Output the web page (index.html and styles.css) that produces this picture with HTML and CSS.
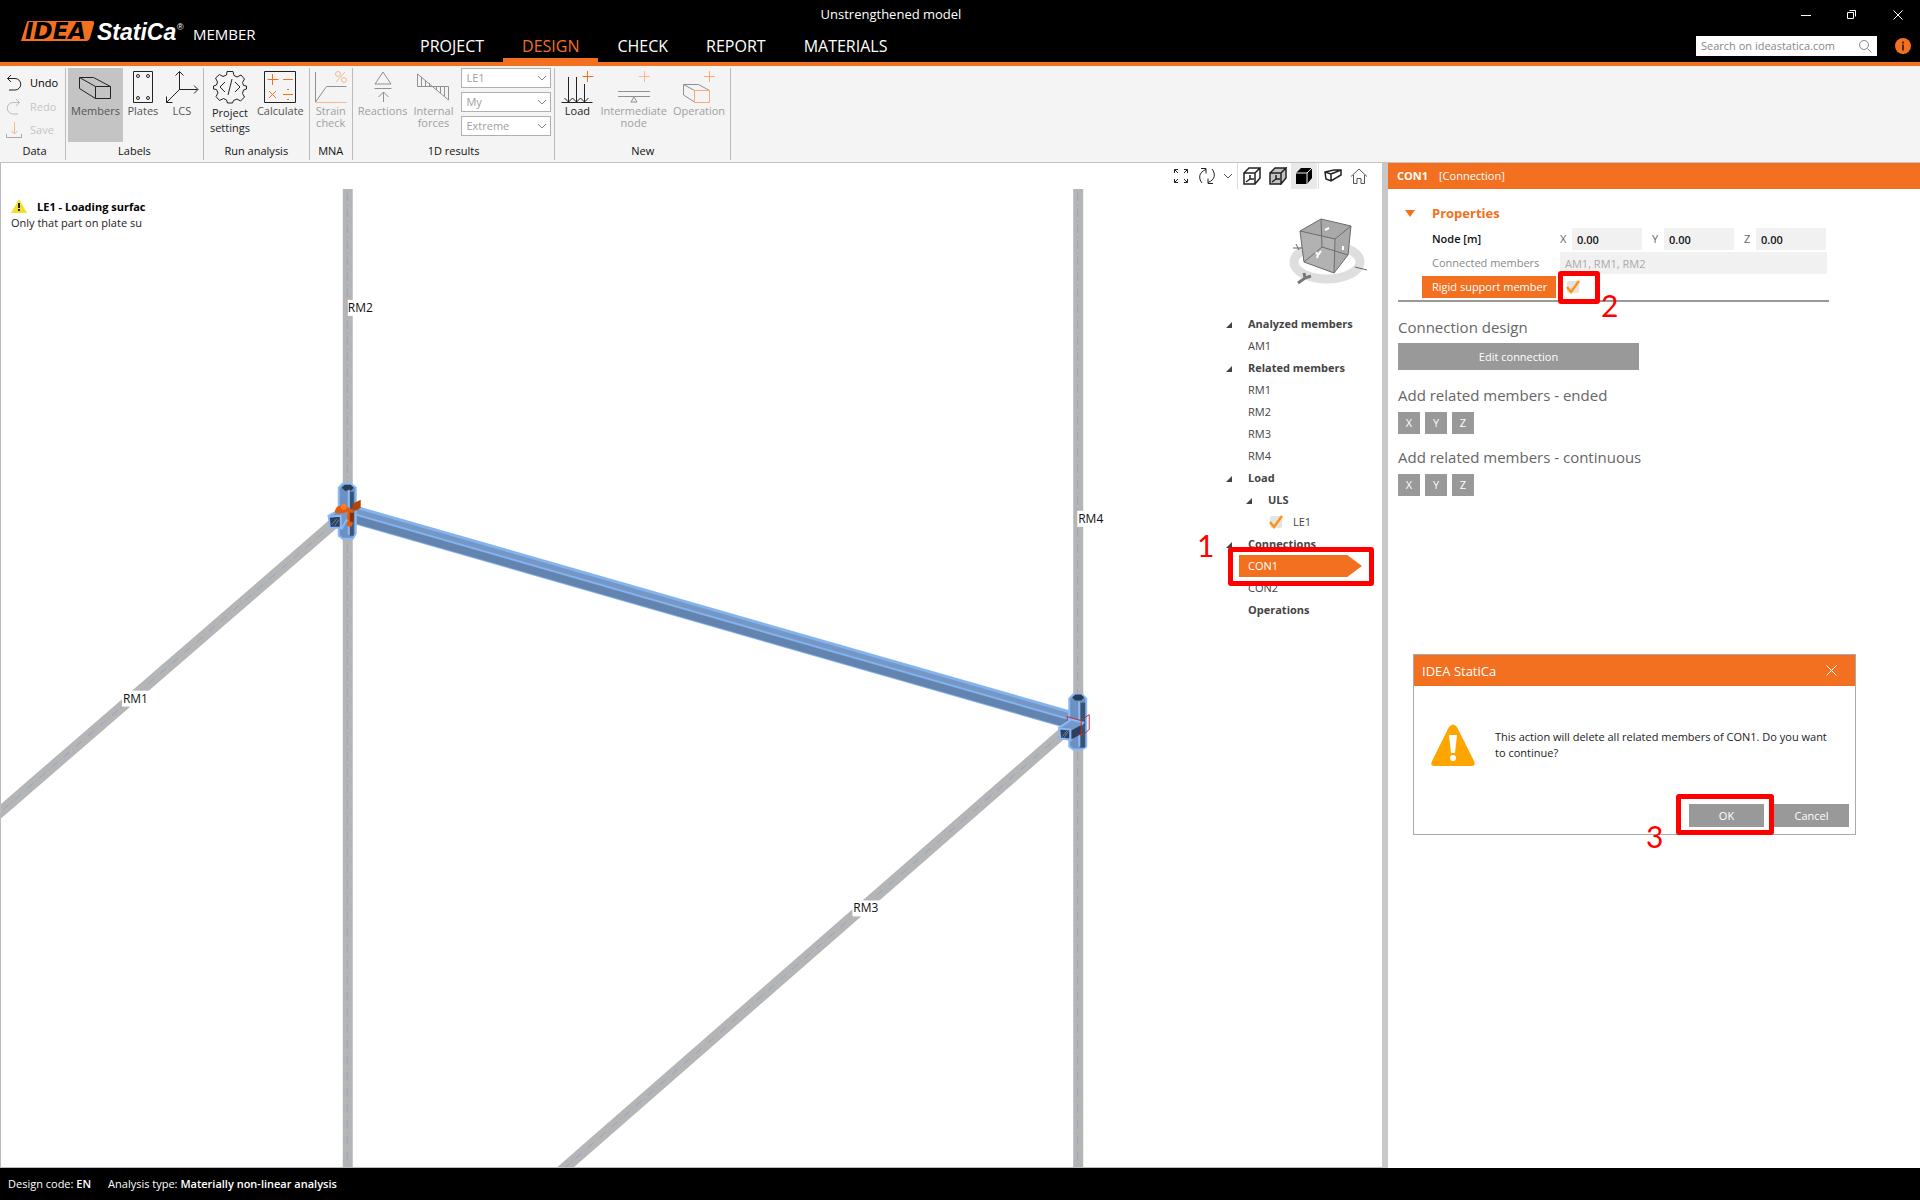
FILE: index.html
```html
<!DOCTYPE html>
<html lang="en">
<head>
  <meta charset="UTF-8">
  <meta name="viewport" content="width=device-width, initial-scale=1.0">
  <title>Unstrengthened model</title>
  <link rel="stylesheet" href="styles.css">
</head>
<body>

  <header class="topbar">
    <div class="brand">
      <svg class="logo" width="170" height="26" viewBox="0 0 170 26">
        <path d="M8 2h64q3 0 2 3l-4 14q-1 3-4 3H1L7 3z" fill="#f37021"/>
        <text class="logo-idea" x="5" y="20">IDEA</text>
        <text class="logo-statica" x="77" y="21">StatiCa</text>
        <text class="logo-reg" x="157" y="11">®</text>
      </svg>
      <span class="product">MEMBER</span>
    </div>
    <nav class="tabs">
      <a href="#" class="tab">PROJECT</a>
      <a href="#" class="tab active">DESIGN</a>
      <a href="#" class="tab">CHECK</a>
      <a href="#" class="tab">REPORT</a>
      <a href="#" class="tab">MATERIALS</a>
    </nav>
    <div class="window-title">Unstrengthened model</div>
    <div class="top-right">
      <div class="window-buttons">
        <button type="button" aria-label="Minimize"><svg width="10" height="10"><path d="M0 5.5h10" stroke="#fff"/></svg></button>
        <button type="button" aria-label="Restore"><svg width="10" height="10" fill="none" stroke="#fff"><path d="M.5 2.5h6v6h-6zM2.500.5h6v6"/></svg></button>
        <button type="button" aria-label="Close"><svg width="10" height="10"><path d="M.5.5l9 9M9.500.5l-9 9" stroke="#fff"/></svg></button>
      </div>
      <div class="search-row">
        <div class="search">
          <input type="text" placeholder="Search on ideastatica.com" aria-label="Search on ideastatica.com">
          <svg width="14" height="14" fill="none" stroke="#888"><circle cx="6" cy="6" r="4.500"/><path d="M9.500 9.500l4 4"/></svg>
        </div>
        <button type="button" class="info" aria-label="Info"><svg width="16" height="16"><circle cx="8" cy="8" r="8" fill="#f37021"/><path d="M7 3.500h2v2H7zM7 6.500h2v6H7z" fill="#4a2a12"/></svg></button>
      </div>
    </div>
  </header>

  <div class="ribbon">
    <section class="group data-group">
      <div class="group-body stack">
        <button type="button" class="small-tool"><svg width="18" height="18" fill="none" stroke="#222"><path d="M5 1L1.500 4.500 5 8M1.500 4.500H9a5.500 5.500 0 010 11.500H3"/></svg>Undo</button>
        <button type="button" class="small-tool" disabled><svg width="18" height="18" fill="none" stroke="#bbb"><path d="M10 1l3.500 3.500L10 8M13.500 4.500H7A5.500 5.500 0 007 16h5"/></svg>Redo</button>
        <button type="button" class="small-tool" disabled><svg width="18" height="18" fill="none" stroke="#aaa"><path d="M.5 13v3.500h15V13"/><path d="M8.500 1v12M5.500 10l3 3 3-3" stroke="#f9b890"/></svg>Save</button>
      </div>
      <h2>Data</h2>
    </section>

    <section class="group">
      <div class="group-body">
        <button type="button" class="tool pressed">
          <svg width="34" height="34" fill="none" stroke="#222"><path d="M1.500 7.500h14l17 9v12h-15l-16-10zM1.500 7.500l16 9h15M17.500 16.500v12"/></svg>
          Members</button>
        <button type="button" class="tool">
          <svg width="34" height="34" fill="none" stroke="#222"><path d="M7.500 1.500h19v31h-19z"/><circle cx="12" cy="6" r="1.500"/><circle cx="22" cy="6" r="1.500"/><circle cx="12" cy="28" r="1.500"/><circle cx="22" cy="28" r="1.500"/></svg>
          Plates</button>
        <button type="button" class="tool tight">
          <svg width="34" height="34" fill="none" stroke="#222"><path d="M14.500 20V1.500M10.500 5.500l4-4 4 4M14.500 19.500h18M29 15.500l4 4-4 4M14.500 19.500l-13 13M1.500 26.500v6h6"/></svg>
          LCS</button>
      </div>
      <h2>Labels</h2>
    </section>

    <section class="group">
      <div class="group-body">
        <button type="button" class="tool dark loose">
          <svg width="34" height="34" fill="none" stroke="#222"><path d="M14 1.500h6l1 4 3 1.500 4-2 3.500 4-2 3.500 1 3 3 .5v3l-3 1-1 3.500 2 3.500-4 4-3.500-2-3.500 1.500-1 2.500h-5l-1-3-3-1.500-4 2-3.500-4 2-3.500-1.500-3.500-3-.5v-3l3-1 1-3-2-4 4-3.500 3.500 2 3.500-1.500zM12 12l-5 5 5 5M22 12l5 5-5 5M19 9l-4 16"/></svg>
          Project<br>settings</button>
        <button type="button" class="tool">
          <svg width="34" height="34" fill="none" stroke="#222"><path d="M1.500 1.500h31v31h-31z"/><path d="M4.500 9.500h11M9.500 4v11M20 9.500h10M6 21l7 7M13 21l-7 7M20 24.500h10M24 19.500h2M24 29.500h2" stroke="#f37021"/></svg>
          Calculate</button>
      </div>
      <h2>Run analysis</h2>
    </section>

    <section class="group">
      <div class="group-body">
        <button type="button" class="tool tight" disabled>
          <svg width="34" height="34" fill="none" stroke="#909090"><path d="M1.500 2v30l11-15.500h20"/><path d="M1.500 32.500h31M31 2L22 12" stroke="#f9b890"/><circle cx="24" cy="4" r="2.500" stroke="#f9b890"/><circle cx="30" cy="10" r="2.500" stroke="#f9b890"/></svg>
          Strain<br>check</button>
      </div>
      <h2>MNA</h2>
    </section>

    <section class="group">
      <div class="group-body">
        <button type="button" class="tool" disabled>
          <svg width="34" height="34" fill="none" stroke="#909090"><path d="M17 2l8 12H9zM8.500 18.500h17M17.500 32V22M12.500 27l5-5 5 5"/></svg>
          Reactions</button>
        <button type="button" class="tool" disabled>
          <svg width="34" height="34" fill="none" stroke="#909090"><path d="M1.500 4v12.500h31V30zM5.500 7v9M9.500 10v6M13.500 13v3M20.500 17v3M24.500 17v6M28.500 17v9"/></svg>
          Internal<br>forces</button>
        <div class="selects">
          <div class="select"><select aria-label="Load case" disabled><option>LE1</option></select><svg width="10" height="6" fill="none" stroke="#888"><path d="M1 1l4 4 4-4"/></svg></div>
          <div class="select"><select aria-label="Result" disabled><option>My</option></select><svg width="10" height="6" fill="none" stroke="#888"><path d="M1 1l4 4 4-4"/></svg></div>
          <div class="select"><select aria-label="Values" disabled><option>Extreme</option></select><svg width="10" height="6" fill="none" stroke="#888"><path d="M1 1l4 4 4-4"/></svg></div>
        </div>
      </div>
      <h2>1D results</h2>
    </section>

    <section class="group">
      <div class="group-body">
        <button type="button" class="tool dark">
          <svg width="34" height="34" fill="none" stroke="#222"><path d="M1.500 32.500h31M8.500 7v25M16.500 7v25M24.500 14v18M4.500 28l4 4 4-4 4 4 4-4 4 4 4-4"/><path d="M22.500 6.500h11M27.500 1v11" stroke="#f37021"/></svg>
          Load</button>
        <button type="button" class="tool" disabled>
          <svg width="34" height="34" fill="none" stroke="#909090"><path d="M1 21.500h32M1 26.500h32M17 27l-3 5h6z"/><path d="M22 6.500h11M27.500 1v11" stroke="#f9b890"/></svg>
          Intermediate<br>node</button>
        <button type="button" class="tool" disabled>
          <svg width="34" height="34" fill="none" stroke="#909090"><path d="M12.500 32l-11-7V14.500h15l11 6M1.500 14.500l11 6"/><path d="M12.500 20.500h15v12h-15zM22 6.500h11M27.500 1v11" stroke="#f9a878"/></svg>
          Operation</button>
      </div>
      <h2>New</h2>
    </section>
  </div>

  <main class="workspace">
    <div class="viewport">
      <svg class="scene" viewBox="0 163 1382 1005" preserveAspectRatio="xMinYMin slice">
        <!-- related members -->
        <g stroke="#b5b5b5" stroke-width="11" fill="none">
          <path d="M347 189V1169M1078 189V1169" stroke-width="10"/>
          <path d="M335 522L-5 816M1063 733L558 1174"/>
        </g>
        <g stroke="#88a5cf" stroke-width="1" stroke-dasharray="8 4 1 3" fill="none">
          <path d="M346.500 193V1169M1077.500 193V1169"/>
          <path d="M335 522L-5 816M1063 733L558 1174"/>
        </g>

        <!-- analyzed member -->
        <path d="M352 505L1070 711V730L352 524z" fill="#85b3ee"/>
        <path d="M352 508L1070 714V719L352 513z" fill="#7597c6"/>
        <path d="M352 515L1070 721V729L352 523z" fill="#6484b0"/>

        <!-- left joint -->
        <path d="M338 488l4-4h8l5 4v46l-3 5h-10l-4-3z" fill="#6c90c1" stroke="#8ab9f7" stroke-width="2"/>
        <path d="M349 492h4v44h-4z" fill="#3b5371"/>
        <path d="M341 488l3-3h6l3 3-3 3h-6z" fill="#263b54"/>
        <path d="M348 490v45" stroke="#8ab9f7" stroke-width="2"/>
        <path d="M328 516l13-7 9 4-9 16z" fill="#7398c9" stroke="#8ab9f7" stroke-width="2"/>
        <path d="M328 517l12-1v12h-11z" fill="#2c4159" stroke="#8ab9f7" stroke-width="2"/>
        <path d="M331 525l5-6M334 526l4-6" stroke="#6784a8"/>
        <path d="M334 512q1-6 6-6 5-2 9 3l4 1-2 11q-4 1-5-2l1-7q-7 3-13 1z" fill="#e35b0d"/>
        <path d="M352 510q-1-7 4-8l4-2v8l-5 3z" fill="#b34409"/>
        <circle cx="343" cy="507" r="3" fill="#ff7b2b"/>
        <circle cx="349" cy="524" r="3" fill="#e35b0d"/>
        <path d="M349 513h4v9h-4z" fill="#873005"/>

        <!-- right joint -->
        <path d="M1069 699l4-4h9l4 4v48l-4 3h-9l-4-3z" fill="#6c90c1" stroke="#8ab9f7" stroke-width="2"/>
        <path d="M1080 703h5v45h-5z" fill="#3b5371"/>
        <path d="M1072 698l3-3h6l3 3-3 3h-6z" fill="#263b54"/>
        <path d="M1079 702v45" stroke="#8ab9f7" stroke-width="2"/>
        <path d="M1059 728l12-8 12 3-12 17z" fill="#7398c9" stroke="#8ab9f7" stroke-width="2"/>
        <path d="M1071 731l11-6v9l-11 6z" fill="#2c4159"/>
        <path d="M1059 729l11 1v10l-10-1z" fill="#2c4159" stroke="#8ab9f7" stroke-width="2"/>
        <path d="M1062 737l5-6M1064 738l4-6" stroke="#6784a8"/>
        <path d="M1067 721v-4l14 4v14M1079 735h4l6-5v-15l-7 5" fill="none" stroke="#c03038"/>

        <g class="member-labels">
          <rect x="347" y="300" width="27" height="16"/><text x="347" y="312">RM2</text>
          <rect x="121" y="691" width="28" height="16"/><text x="122" y="703">RM1</text>
          <rect x="852" y="901" width="28" height="16"/><text x="853" y="913">RM3</text>
          <rect x="1077" y="511" width="28" height="16"/><text x="1078" y="523">RM4</text>
        </g>
      </svg>

      <div class="notice">
        <p class="notice-title"><svg width="16" height="15"><path d="M8 0l8 14H0z" fill="#f2e02c"/><path d="M7 4h2v5H7zM7 10h2v2H7z" fill="#222"/></svg><strong>LE1 - Loading surfac</strong></p>
        <p>Only that part on plate su</p>
      </div>

      <div class="side">
        <div class="view-tools">
          <button type="button" aria-label="Zoom to fit"><svg width="18" height="18" fill="none" stroke="#222"><path d="M2.500 6V2.500H6M2.500 2.500L6 6M12 2.500h3.500V6M15.500 2.500L12 6M2.500 12v3.500H6M2.500 15.500L6 12M15.500 12v3.500H12M15.500 15.500L12 12"/></svg></button>
          <button type="button" aria-label="Rotate"><svg width="18" height="18" fill="none" stroke="#222"><path d="M4 16C0 11 1 5 8 2.500M3 1.500h5v5M14 2c4 5 3 11-4 13.500M15 16.500h-5v-5"/></svg></button>
          <button type="button" class="narrow" aria-label="More"><svg width="10" height="18" fill="none" stroke="#555"><path d="M1 7l4 4 4-4"/></svg></button>
          <span class="sep"></span>
          <button type="button" aria-label="Wireframe"><svg width="18" height="18" fill="none" stroke="#222" stroke-width="1.500"><path d="M1 6h11v11H1zM1 6l5-5h11l-5 5M17 1v10l-5 6M7 8v4h4M7 12l-4 3"/></svg></button>
          <button type="button" aria-label="Transparent"><svg width="18" height="18" fill="#c2c2c2" stroke="#222" stroke-width="1.500"><path d="M1 6h11v11H1zM1 6l5-5h11l-5 5M17 1v10l-5 6V6z"/><path d="M7 8v4h4M7 12l-4 3" fill="none"/></svg></button>
          <button type="button" class="on" aria-label="Solid"><svg width="18" height="18"><path d="M1 6l5-5h11v10l-5 6H1z"/><path d="M1 6h11l5-5M12 6v11" stroke="#eee" fill="none"/></svg></button>
          <span class="sep"></span>
          <button type="button" aria-label="Section"><svg width="18" height="18" fill="none" stroke="#222" stroke-width="1.500"><path d="M1 5l9-2h7v5l-10 6-5-2zM1 5l6 2v7M7 7l10-4"/></svg></button>
          <button type="button" aria-label="Home"><svg width="18" height="18" fill="none" stroke="#555"><path d="M1 9.500l8-7.500 8 7.500M3.500 8v8.500H7v-5h4v5h3.500V8"/></svg></button>
        </div>

        <svg class="view-cube" width="82" height="76" viewBox="1286 215 82 76">
          <ellipse cx="1327" cy="262" rx="33" ry="17" fill="none" stroke="#dedede" stroke-width="9"/>
          <path d="M1300 231l21-12 30 7-3 29-14 18-30-11z" fill="#a9a9a9"/>
          <path d="M1300 231l35 8-1 34-30-11z" fill="#b2b2b2"/>
          <path d="M1300 231l21-12 30 7-16 13zM1335 239l-1 34M1300 231l4 31 30 11 14-18 3-29M1321 219l1 28-18 15M1322 247l26 8" fill="none" stroke="#6c6c6c"/>
          <path d="M1316 252l2 3 3-4M1318 255l-1 3M1325 230l4-2M1343 250v-4" stroke="#fff" stroke-width="2" fill="none"/>
          <path d="M1293 248h9M1296 244l3 6M1355 267l12 3" stroke="#666" fill="none"/>
          <path d="M1298 283l7-5 6-2M1304 273l1 5" stroke="#777" stroke-width="3" fill="none"/>
        </svg>

        <ul class="tree">
          <li class="head"><span class="arrow"></span>Analyzed members</li>
          <li>AM1</li>
          <li class="head"><span class="arrow"></span>Related members</li>
          <li>RM1</li>
          <li>RM2</li>
          <li>RM3</li>
          <li>RM4</li>
          <li class="head"><span class="arrow"></span>Load</li>
          <li class="head sub"><span class="arrow"></span>ULS</li>
          <li class="leaf"><label class="check"><input type="checkbox" checked><svg width="16" height="16"><path d="M2 8l4 5 8-11" fill="none" stroke="#ff9311" stroke-width="2.500"/></svg>LE1</label></li>
          <li class="head"><span class="arrow"></span>Connections</li>
          <li class="selected"><span class="flag">CON1</span><span class="mark mark-tree"></span><span class="step step-tree">1</span></li>
          <li>CON2</li>
          <li class="head">Operations</li>
        </ul>
      </div>
    </div>

    <aside class="panel">
      <h1 class="panel-title"><strong>CON1</strong> <span>[Connection]</span></h1>
      <div class="panel-body">
        <h2 class="properties-title"><span class="down"></span>Properties</h2>
        <div class="properties">
          <div class="prop node-row">
            <span class="prop-name">Node [m]</span>
            <label for="nodeX">X</label><input type="text" id="nodeX" value="0.00">
            <label for="nodeY">Y</label><input type="text" id="nodeY" value="0.00">
            <label for="nodeZ">Z</label><input type="text" id="nodeZ" value="0.00">
          </div>
          <div class="prop">
            <label class="prop-name muted" for="connected">Connected members</label>
            <input type="text" class="wide" id="connected" value="AM1, RM1, RM2" disabled>
          </div>
          <div class="prop">
            <label class="prop-name highlight" for="rigid">Rigid support member</label>
            <span class="check rigid"><input type="checkbox" id="rigid" checked><svg width="16" height="16"><path d="M2 8l4 5 8-11" fill="none" stroke="#ff9311" stroke-width="2.500"/></svg>
              <span class="mark mark-check"></span><span class="step step-check">2</span></span>
          </div>
        </div>

        <h3>Connection design</h3>
        <button type="button" class="btn edit">Edit connection</button>

        <h3>Add related members - ended</h3>
        <div class="axes">
          <button type="button" class="btn">X</button>
          <button type="button" class="btn">Y</button>
          <button type="button" class="btn">Z</button>
        </div>

        <h3>Add related members - continuous</h3>
        <div class="axes">
          <button type="button" class="btn">X</button>
          <button type="button" class="btn">Y</button>
          <button type="button" class="btn">Z</button>
        </div>
      </div>

      <div class="dialog" role="dialog" aria-labelledby="dialogTitle">
        <div class="dialog-head">
          <span id="dialogTitle">IDEA StatiCa</span>
          <button type="button" aria-label="Close"><svg width="11" height="11"><path d="M.5.5l10 10M10.500.5l-10 10" stroke="#fff"/></svg></button>
        </div>
        <div class="dialog-body">
          <svg width="44" height="42" viewBox="0 0 44 42"><path d="M18 3q4-5 8 0l17 34q2 5-2 5H3q-4 0-2-5z" fill="#ffa500"/><path d="M18 11h8l-2 18h-4z" fill="#fff"/><circle cx="22" cy="34" r="3" fill="#fff"/></svg>
          <p>This action will delete all related members of CON1. Do you want<br>to continue?</p>
        </div>
        <div class="dialog-foot">
          <div class="ok-wrap">
            <button type="button" class="btn">OK</button>
            <span class="mark mark-ok"></span><span class="step step-ok">3</span>
          </div>
          <button type="button" class="btn">Cancel</button>
        </div>
      </div>
    </aside>
  </main>

  <footer class="status">
    <span>Design code: <b>EN</b></span>
    <span>Analysis type: <b>Materially non-linear analysis</b></span>
  </footer>

</body>
</html>
```
FILE: styles.css
```css
* {
  box-sizing: border-box;
}

body {
  margin: 0;
  min-height: 100vh;
  display: flex;
  flex-direction: column;
  font-family: "Open Sans", "Noto Sans", sans-serif;
  font-size: 11px;
  line-height: 16px;
  color: #222;
  background-color: #fff;
}

h1, h2, h3, p, ul {
  margin: 0;
  padding: 0;
  font-weight: normal;
}

button, input, select {
  font: inherit;
  color: inherit;
  border: none;
  padding: 0;
  background: none;
}

svg {
  display: block;
}

/* top bar */
.topbar {
  position: relative;
  display: flex;
  height: 66px;
  background-color: #000;
  border-bottom: 4px solid #f37021;
  color: #fff;
}

.brand {
  width: 401px;
  display: flex;
  align-items: flex-start;
  padding: 19px 0 0 20px;
}

.logo {
  margin-right: 3px;
}

.logo-idea {
  font: italic bold 23px "DejaVu Sans", sans-serif;
}

.logo-statica {
  font: italic bold 23px "Liberation Sans", sans-serif;
  fill: #fff;
}

.logo-reg {
  font: 9px "Liberation Sans", sans-serif;
  fill: #fff;
}

.product {
  font-size: 15px;
  line-height: 30px;
}

.tabs {
  display: flex;
  align-items: flex-end;
}

.tab {
  padding: 0 19px;
  font-size: 16px;
  line-height: 24px;
  color: #fff;
  text-decoration: none;
  border-bottom: 4px solid transparent;
}

.tab.active {
  color: #f37021;
  border-color: #f37021;
}

.window-title {
  position: absolute;
  top: 5px;
  left: 0;
  width: 100%;
  padding-right: 138px;
  text-align: center;
  font-size: 13px;
  line-height: 18px;
  pointer-events: none;
}

.top-right {
  margin-left: auto;
  padding-right: 9px;
}

.window-buttons {
  display: flex;
  justify-content: flex-end;
  height: 36px;
  padding: 10px 8px 0 0;
  gap: 36px;
}

.window-buttons button {
  height: 10px;
}

.search-row {
  display: flex;
  gap: 18px;
  align-items: center;
}

.search {
  display: flex;
  align-items: center;
  width: 181px;
  height: 20px;
  padding: 0 5px;
  background-color: #fff;
}

.search input {
  flex: 1;
  min-width: 0;
}

.search input::placeholder {
  color: #888;
}

/* ribbon */
.ribbon {
  display: flex;
  height: 97px;
  padding: 2px 0;
  background-color: #f4f4f4;
  border-bottom: 1px solid #c4c4c4;
}

.group {
  display: flex;
  flex-direction: column;
  padding: 0 2px;
  border-right: 1px solid #bbb;
}

.group-body {
  display: flex;
  height: 74px;
}

.group h2 {
  text-align: center;
  font-size: 11px;
  line-height: 18px;
  color: #111;
}

.data-group {
  width: 66px;
}

.data-group h2 {
  padding-left: 4px;
}

.stack {
  flex-direction: column;
  padding: 3px 4px 0;
}

.small-tool {
  display: flex;
  align-items: center;
  gap: 6px;
  height: 24px;
  color: #000;
}

.small-tool:disabled {
  color: #c4c4c4;
}

.tool {
  display: flex;
  flex-direction: column;
  align-items: center;
  min-width: 38px;
  padding: 2px 3px 0;
  line-height: 12px;
  color: #555;
}

.tool svg {
  margin-bottom: 1px;
}

.tool.tight {
  min-width: 0;
  padding: 2px 2px 0;
}

.tool.dark {
  color: #222;
}

.tool.loose {
  padding: 2px 4px 0;
  line-height: 15px;
}

.tool.pressed {
  background-color: #c4c4c4;
}

.tool:disabled {
  color: #a0a0a0;
}

.selects {
  display: flex;
  flex-direction: column;
  gap: 4px;
  width: 96px;
  padding: 0 1px 0 5px;
}

.select {
  position: relative;
}

.select select {
  display: block;
  appearance: none;
  width: 100%;
  height: 20px;
  padding: 0 4px;
  border: 1px solid #b0b0b0;
  background-color: #fff;
  color: #a0a0a0;
  opacity: 1;
}

.select svg {
  position: absolute;
  top: 7px;
  right: 4px;
}

/* workspace */
.workspace {
  flex: 1;
  display: flex;
}

.viewport {
  position: relative;
  flex: 1;
  overflow: hidden;
  border-left: 1px solid #bbb;
  border-bottom: 1px solid #bbb;
}

.scene {
  position: absolute;
  top: 0;
  left: 0;
  width: 100%;
  height: 100%;
}

.member-labels rect {
  fill: #fff;
}

.member-labels text {
  font-size: 12px;
  fill: #111;
}

.notice {
  position: absolute;
  top: 36px;
  left: 10px;
  width: 136px;
  overflow: hidden;
  white-space: nowrap;
}

.notice-title {
  display: flex;
  gap: 10px;
  color: #000;
}

.notice-title svg {
  flex: none;
}

.side {
  position: absolute;
  top: 0;
  right: 0;
  width: 216px;
}

.view-tools {
  display: flex;
  justify-content: flex-end;
  height: 26px;
  padding-right: 10px;
}

.view-tools button {
  display: flex;
  align-items: center;
  justify-content: center;
  width: 26px;
}

.view-tools .narrow {
  width: 16px;
}

.view-tools .on {
  background-color: #e9e9e9;
}

.sep {
  width: 1px;
  margin: 0 1px;
  background-color: #ddd;
}

.view-cube {
  margin: 26px 14px 22px auto;
}

.tree {
  list-style: none;
  padding-left: 58px;
}

.tree li {
  position: relative;
  padding-left: 24px;
  line-height: 22px;
  height: 22px;
  color: #444;
}

.tree .head {
  font-weight: bold;
}

.tree .sub {
  padding-left: 44px;
}

.tree .leaf {
  padding-left: 44px;
}

.arrow {
  position: absolute;
  top: 9px;
  left: 2px;
  border-left: 6px solid transparent;
  border-bottom: 6px solid #444;
}

.sub .arrow {
  left: 22px;
}

.check {
  position: relative;
  display: flex;
  align-items: center;
  gap: 10px;
}

.check input {
  appearance: none;
  width: 12px;
  height: 12px;
  margin: 0 1px 0 2px;
  border-radius: 2px;
  background-color: #e4e4e4;
}

.check svg {
  position: absolute;
  left: 0;
}

.tree .selected {
  z-index: 1;
  padding-left: 15px;
}

.flag {
  display: block;
  width: 123px;
  padding-left: 9px;
  background-color: #f37021;
  color: #fff;
  clip-path: polygon(0 0, 88% 0, 100% 50%, 88% 100%, 0 100%);
}

/* numbered steps */
.mark {
  position: absolute;
  border: 5px solid #f00;
  border-radius: 3px;
  pointer-events: none;
}

.step {
  position: absolute;
  font-family: Lato, sans-serif;
  font-size: 30px;
  line-height: 30px;
  color: #f00;
}

.mark-tree {
  top: -8px;
  left: 4px;
  width: 146px;
  height: 39px;
}

.step-tree {
  top: -25px;
  left: -27px;
}

.mark-check {
  top: -5px;
  left: -7px;
  width: 42px;
  height: 33px;
}

.step-check {
  top: 14px;
  left: 36px;
}

.mark-ok {
  top: -10px;
  left: -13px;
  width: 98px;
  height: 41px;
}

.step-ok {
  top: 17px;
  left: -43px;
}

/* right panel */
.panel {
  position: relative;
  width: 538px;
  border-left: 6px solid #c8c8c8;
}

.panel-title {
  display: flex;
  gap: 11px;
  padding-left: 9px;
  font-size: 11px;
  line-height: 26px;
  background-color: #f37021;
  color: #fff;
}

.panel-body {
  padding: 13px 10px;
}

.properties-title {
  display: flex;
  align-items: center;
  gap: 17px;
  padding-left: 7px;
  font-size: 13px;
  line-height: 22px;
  font-weight: bold;
  color: #f37021;
}

.down {
  border: 5px solid transparent;
  border-top: 7px solid #f37021;
  border-bottom: none;
}

.properties {
  width: 431px;
  padding: 4px 0 0 24px;
  border-bottom: 2px solid #999;
}

.prop {
  display: flex;
  align-items: center;
  height: 22px;
  margin-bottom: 2px;
}

.prop-name {
  width: 134px;
  padding-left: 10px;
  line-height: 22px;
  color: #111;
}

.prop .muted {
  color: #888;
}

.prop .highlight {
  background-color: #f37021;
  color: #fff;
}

.prop input[type="text"] {
  width: 70px;
  height: 22px;
  padding: 0 5px;
  background-color: #f1f1f1;
  color: #111;
}

.node-row {
  font-weight: 600;
}

.node-row label {
  width: 22px;
  padding-left: 10px;
  font-weight: normal;
  color: #666;
}

.node-row .prop-name {
  width: 128px;
}

.prop input.wide {
  width: 267px;
  margin-left: 4px;
  color: #aaa;
}

.rigid {
  height: 22px;
  margin-left: 9px;
}

.panel h3 {
  padding: 14px 0 5px;
  font-size: 15px;
  line-height: 22px;
  color: #666;
}

.btn {
  min-width: 22px;
  height: 22px;
  background-color: #999;
  color: #fff;
}

.edit {
  display: block;
  width: 241px;
  height: 27px;
}

.axes {
  display: flex;
  gap: 5px;
  margin-top: 1px;
}

.axes + h3 {
  padding-top: 12px;
}

/* dialog */
.dialog {
  position: absolute;
  top: 491px;
  right: 64px;
  width: 443px;
  border: 1px solid #aaa;
  background-color: #fff;
}

.dialog-head {
  display: flex;
  justify-content: space-between;
  align-items: center;
  height: 31px;
  padding: 0 18px 0 8px;
  font-size: 13px;
  background-color: #f37021;
  color: #fff;
}

.dialog-body {
  display: flex;
  align-items: center;
  gap: 20px;
  height: 118px;
  padding: 0 14px 0 17px;
}

.dialog-body svg {
  flex: none;
}

.dialog-foot {
  display: flex;
  justify-content: flex-end;
  gap: 10px;
  padding: 0 6px 7px;
}

.dialog-foot .btn {
  display: block;
  width: 75px;
  height: 23px;
}

.ok-wrap {
  position: relative;
}

/* status bar */
.status {
  display: flex;
  gap: 17px;
  padding: 0 8px;
  line-height: 32px;
  background-color: #000;
  color: #fff;
}

.status b {
  font-weight: 600;
}
```
